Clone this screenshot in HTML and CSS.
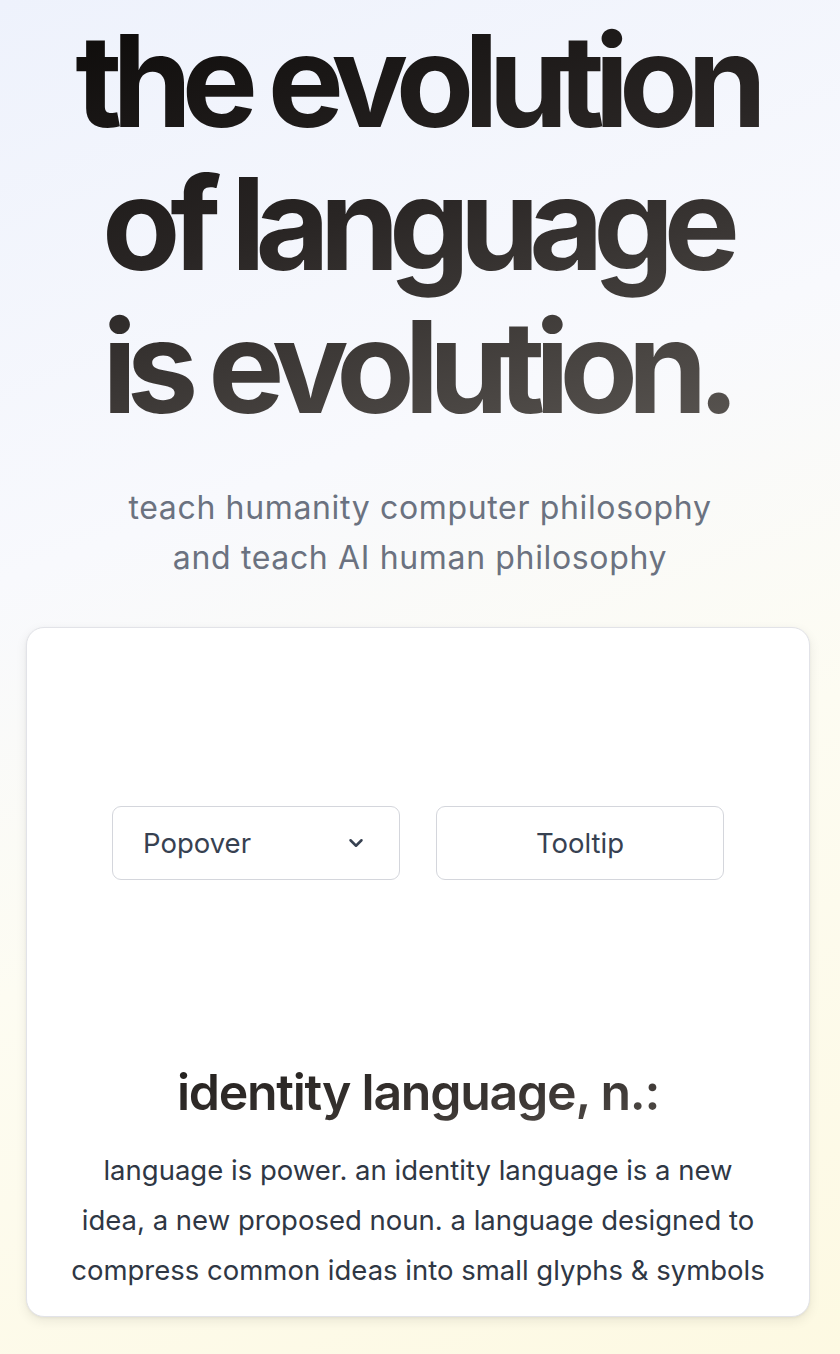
FILE: index.html
```html
<!DOCTYPE html>
<html lang="en">
<head>
<meta charset="utf-8">
<title>the evolution of language</title>
<link rel="stylesheet" href="styles.css">
</head>
<body>
<main class="page">
  <h1 class="hero-title">the evolution<br>of language<br>is evolution.</h1>
  <p class="hero-sub">teach humanity computer philosophy<br>and teach AI human philosophy</p>
  <section class="card">
    <div class="demo">
      <button class="btn btn-select" type="button">
        <span>Popover</span>
        <svg class="chev" width="16" height="16" viewBox="0 0 16 16" fill="none" stroke="currentColor" stroke-width="1.8" stroke-linecap="round" stroke-linejoin="round"><path d="M4 6l4 4 4-4"/></svg>
      </button>
      <button class="btn" type="button">Tooltip</button>
    </div>
    <h2 class="card-title">identity language, n.:</h2>
    <p class="card-body">language is power. an identity language is a new<br>idea, a new proposed noun. a language designed to<br>compress common ideas into small glyphs &amp; symbols</p>
  </section>
</main>
</body>
</html>
```

FILE: styles.css
```css
* { box-sizing: border-box; }
html, body { margin: 0; padding: 0; }
body {
  font-family: Inter, "Noto Sans", "Liberation Sans", sans-serif;
  min-height: 1354px;
  background: linear-gradient(160deg, #eef2fc 0%, #f8f9fd 35%, #fdfcf2 60%, #fdf9e2 100%);
  color: #374151;
}
.page {
  padding: 9px 0 40px;
  display: flex;
  flex-direction: column;
  align-items: center;
}
.hero-title {
  margin: 0;
  font-size: 128px;
  line-height: 143px;
  font-weight: 700;
  letter-spacing: -0.08em;
  text-align: center;
  background: linear-gradient(165deg, #0c0a09 0%, #292524 45%, #5b5753 100%);
  -webkit-background-clip: text;
  background-clip: text;
  color: transparent;
  padding: 0 12px 0 4px;
}
.hero-sub {
  margin: 45px 0 0;
  font-size: 32px;
  line-height: 50px;
  color: #6b7280;
  text-align: center;
  letter-spacing: 0.65px;
}
.card {
  margin: 44px 0 0 -4px;
  width: 784px;
  background: #fff;
  border: 1px solid #e2e3e8;
  border-radius: 18px;
  box-shadow: 0 4px 12px rgba(0,0,0,0.08), 0 1px 3px rgba(0,0,0,0.05);
  padding: 0 20px 21px;
  text-align: center;
}
.demo {
  height: 430px;
  display: flex;
  align-items: center;
  justify-content: center;
  gap: 36px;
}
.btn {
  width: 288px;
  height: 74px;
  border: 1px solid #d4d6dc;
  border-radius: 9px;
  background: #fff;
  font-family: inherit;
  font-size: 27.5px;
  color: #374151;
  display: flex;
  align-items: center;
  justify-content: center;
  padding: 0 30px;
}
.btn-select { justify-content: space-between; }
.chev { width: 22px; height: 22px; color: #374151; margin-right: 2px; }
.card-title {
  margin: 4px 0 0;
  font-size: 50px;
  line-height: 60px;
  font-weight: 600;
  letter-spacing: -0.025em;
  background: linear-gradient(170deg, #1c1917 0%, #3a3532 60%, #5a5551 100%);
  -webkit-background-clip: text;
  background-clip: text;
  color: transparent;
}
.card-body {
  margin: 23px 0 0;
  font-size: 27.5px;
  line-height: 50px;
  color: #2f3744;
  white-space: nowrap;
}
```
